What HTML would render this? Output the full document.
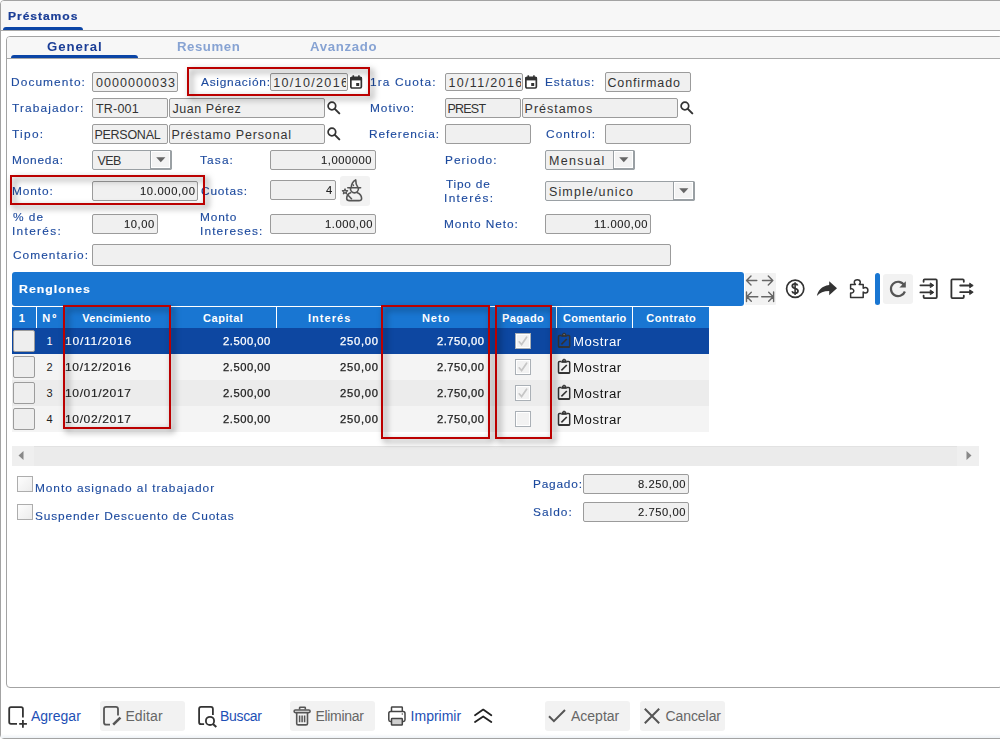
<!DOCTYPE html><html><head><meta charset="utf-8"><style>
html,body{margin:0;padding:0;width:1000px;height:741px;overflow:hidden;background:#fff;}
body{position:relative;font-family:"Liberation Sans",sans-serif;}
.a{position:absolute;box-sizing:border-box;}
.t{position:absolute;white-space:nowrap;}
.inp{position:absolute;box-sizing:border-box;background:#f0f0f0;border:1px solid #9b9b9b;border-radius:2px;}
.btn{position:absolute;box-sizing:border-box;background:#f3f3f3;border-left:1px solid #9b9b9b;box-shadow:inset 1px 1px 0 #fff, inset -1px -1px 0 #fff;}
.red{position:absolute;box-sizing:border-box;border:2px solid #bb0000;filter:drop-shadow(3.5px 3.5px 3px rgba(0,0,0,.55));}
svg{position:absolute;overflow:visible;}
</style></head><body>
<div class="a" style="left:0px;top:0px;width:1010px;height:739px;border:1px solid #a3a3a3;border-radius:4px;background:#fff;"></div>
<div class="a" style="left:1px;top:1px;width:1010px;height:29px;background:#f7f7f7;border-radius:3px 0 0 0;"></div>
<div class="a" style="left:1px;top:30px;width:1010px;height:1px;background:#a8a8a8;"></div>
<div class="t" style="left:7.90px;top:1.00px;font-size:11px;line-height:30px;color:#1a3d96;letter-spacing:0.852px;font-weight:bold;transform:scaleX(1.1);transform-origin:0 0;-webkit-text-stroke:0.2px #1a3d96;">Préstamos</div>
<div class="a" style="left:3px;top:27px;width:80px;height:3px;background:#0b45a6;border-radius:3px 3px 0 0;"></div>
<div class="a" style="left:1px;top:734px;width:1010px;height:4px;background:linear-gradient(#fff,#eef2f6);"></div>
<div class="a" style="left:6px;top:36px;width:997px;height:652px;border:1px solid #a3a3a3;border-radius:4px;background:#fff;"></div>
<div class="a" style="left:7px;top:37px;width:995px;height:21px;background:#f7f7f7;border-radius:3px 0 0 0;"></div>
<div class="a" style="left:7px;top:58px;width:995px;height:1px;background:#a8a8a8;"></div>
<div class="a" style="left:11px;top:55px;width:127px;height:3px;background:#0b45a6;border-radius:3px 3px 0 0;"></div>
<div class="t" style="left:47.20px;top:32.00px;font-size:12px;line-height:30px;color:#1a3d96;letter-spacing:0.833px;font-weight:bold;transform:scaleX(1.1);transform-origin:0 0;">General</div>
<div class="t" style="left:177.30px;top:32.00px;font-size:12px;line-height:30px;color:#87a3d3;letter-spacing:0.500px;font-weight:bold;transform:scaleX(1.1);transform-origin:0 0;">Resumen</div>
<div class="t" style="left:310.40px;top:32.00px;font-size:12px;line-height:30px;color:#87a3d3;letter-spacing:0.623px;font-weight:bold;transform:scaleX(1.1);transform-origin:0 0;">Avanzado</div>
<div class="t" style="left:11.42px;top:67.00px;font-size:11px;line-height:30px;color:#1d4a9e;letter-spacing:1.014px;transform:scaleX(1.08);transform-origin:0 0;-webkit-text-stroke:0.12px #1d4a9e;">Documento:</div>
<div class="t" style="left:200.60px;top:67.00px;font-size:11px;line-height:30px;color:#1d4a9e;letter-spacing:0.696px;transform:scaleX(1.08);transform-origin:0 0;-webkit-text-stroke:0.12px #1d4a9e;">Asignación:</div>
<div class="t" style="left:369.92px;top:67.00px;font-size:11px;line-height:30px;color:#1d4a9e;letter-spacing:1.029px;transform:scaleX(1.08);transform-origin:0 0;-webkit-text-stroke:0.12px #1d4a9e;">1ra Cuota:</div>
<div class="t" style="left:544.52px;top:67.00px;font-size:11px;line-height:30px;color:#1d4a9e;letter-spacing:0.841px;transform:scaleX(1.08);transform-origin:0 0;-webkit-text-stroke:0.12px #1d4a9e;">Estatus:</div>
<div class="t" style="left:12.00px;top:93.00px;font-size:11px;line-height:30px;color:#1d4a9e;letter-spacing:1.028px;transform:scaleX(1.08);transform-origin:0 0;-webkit-text-stroke:0.12px #1d4a9e;">Trabajador:</div>
<div class="t" style="left:369.52px;top:93.00px;font-size:11px;line-height:30px;color:#1d4a9e;letter-spacing:0.877px;transform:scaleX(1.08);transform-origin:0 0;-webkit-text-stroke:0.12px #1d4a9e;">Motivo:</div>
<div class="t" style="left:12.00px;top:119.00px;font-size:11px;line-height:30px;color:#1d4a9e;letter-spacing:1.194px;transform:scaleX(1.08);transform-origin:0 0;-webkit-text-stroke:0.12px #1d4a9e;">Tipo:</div>
<div class="t" style="left:369.32px;top:119.00px;font-size:11px;line-height:30px;color:#1d4a9e;letter-spacing:0.852px;transform:scaleX(1.08);transform-origin:0 0;-webkit-text-stroke:0.12px #1d4a9e;">Referencia:</div>
<div class="t" style="left:545.60px;top:119.00px;font-size:11px;line-height:30px;color:#1d4a9e;letter-spacing:0.974px;transform:scaleX(1.08);transform-origin:0 0;-webkit-text-stroke:0.12px #1d4a9e;">Control:</div>
<div class="t" style="left:11.72px;top:145.00px;font-size:11px;line-height:30px;color:#1d4a9e;letter-spacing:0.728px;transform:scaleX(1.08);transform-origin:0 0;-webkit-text-stroke:0.12px #1d4a9e;">Moneda:</div>
<div class="t" style="left:200.40px;top:145.00px;font-size:11px;line-height:30px;color:#1d4a9e;letter-spacing:1.046px;transform:scaleX(1.08);transform-origin:0 0;-webkit-text-stroke:0.12px #1d4a9e;">Tasa:</div>
<div class="t" style="left:444.52px;top:145.00px;font-size:11px;line-height:30px;color:#1d4a9e;letter-spacing:0.963px;transform:scaleX(1.08);transform-origin:0 0;-webkit-text-stroke:0.12px #1d4a9e;">Periodo:</div>
<div class="t" style="left:11.92px;top:176.00px;font-size:11px;line-height:30px;color:#1d4a9e;letter-spacing:0.822px;transform:scaleX(1.08);transform-origin:0 0;-webkit-text-stroke:0.12px #1d4a9e;">Monto:</div>
<div class="t" style="left:201.00px;top:176.00px;font-size:11px;line-height:30px;color:#1d4a9e;letter-spacing:0.778px;transform:scaleX(1.08);transform-origin:0 0;-webkit-text-stroke:0.12px #1d4a9e;">Cuotas:</div>
<div class="t" style="left:445.50px;top:169.00px;font-size:11px;line-height:30px;color:#1d4a9e;letter-spacing:0.713px;transform:scaleX(1.08);transform-origin:0 0;-webkit-text-stroke:0.12px #1d4a9e;">Tipo de</div>
<div class="t" style="left:444.42px;top:183.00px;font-size:11px;line-height:30px;color:#1d4a9e;letter-spacing:1.257px;transform:scaleX(1.08);transform-origin:0 0;-webkit-text-stroke:0.12px #1d4a9e;">Interés:</div>
<div class="t" style="left:12.80px;top:202.00px;font-size:11px;line-height:30px;color:#1d4a9e;letter-spacing:0.926px;transform:scaleX(1.08);transform-origin:0 0;-webkit-text-stroke:0.12px #1d4a9e;">% de</div>
<div class="t" style="left:11.92px;top:216.00px;font-size:11px;line-height:30px;color:#1d4a9e;letter-spacing:1.217px;transform:scaleX(1.08);transform-origin:0 0;-webkit-text-stroke:0.12px #1d4a9e;">Interés:</div>
<div class="t" style="left:199.92px;top:202.00px;font-size:11px;line-height:30px;color:#1d4a9e;letter-spacing:0.759px;transform:scaleX(1.08);transform-origin:0 0;-webkit-text-stroke:0.12px #1d4a9e;">Monto</div>
<div class="t" style="left:199.92px;top:216.00px;font-size:11px;line-height:30px;color:#1d4a9e;letter-spacing:1.053px;transform:scaleX(1.08);transform-origin:0 0;-webkit-text-stroke:0.12px #1d4a9e;">Intereses:</div>
<div class="t" style="left:444.42px;top:208.50px;font-size:11px;line-height:30px;color:#1d4a9e;letter-spacing:0.839px;transform:scaleX(1.08);transform-origin:0 0;-webkit-text-stroke:0.12px #1d4a9e;">Monto Neto:</div>
<div class="t" style="left:12.60px;top:240.00px;font-size:11px;line-height:30px;color:#1d4a9e;letter-spacing:0.952px;transform:scaleX(1.08);transform-origin:0 0;-webkit-text-stroke:0.12px #1d4a9e;">Comentario:</div>
<div class="t" style="left:35.17px;top:473.00px;font-size:11px;line-height:30px;color:#1d4a9e;letter-spacing:0.865px;transform:scaleX(1.08);transform-origin:0 0;-webkit-text-stroke:0.12px #1d4a9e;">Monto asignado al trabajador</div>
<div class="t" style="left:35.17px;top:501.00px;font-size:11px;line-height:30px;color:#1d4a9e;letter-spacing:0.781px;transform:scaleX(1.08);transform-origin:0 0;-webkit-text-stroke:0.12px #1d4a9e;">Suspender Descuento de Cuotas</div>
<div class="t" style="left:532.52px;top:469.00px;font-size:11px;line-height:30px;color:#1d4a9e;letter-spacing:0.722px;transform:scaleX(1.08);transform-origin:0 0;-webkit-text-stroke:0.12px #1d4a9e;">Pagado:</div>
<div class="t" style="left:532.52px;top:497.00px;font-size:11px;line-height:30px;color:#1d4a9e;letter-spacing:0.926px;transform:scaleX(1.08);transform-origin:0 0;-webkit-text-stroke:0.12px #1d4a9e;">Saldo:</div>
<div class="inp" style="left:92px;top:72px;width:86px;height:20px;"></div>
<div class="t" style="left:96.00px;top:68.00px;font-size:12.5px;line-height:30px;color:#333;letter-spacing:1.044px;">0000000033</div>
<div class="inp" style="left:270px;top:73px;width:78px;height:18px;"></div>
<div class="a" style="left:271px;top:74px;width:75px;height:16px;overflow:hidden"><div class="t" style="left:273.20px;top:68.00px;font-size:12.5px;line-height:30px;color:#333;letter-spacing:1.350px;;left:2.20px;top:-6.00px">10/10/2016</div></div>
<div class="inp" style="left:445px;top:73px;width:78px;height:18px;"></div>
<div class="a" style="left:446px;top:74px;width:75px;height:16px;overflow:hidden"><div class="t" style="left:448.40px;top:68.00px;font-size:12.5px;line-height:30px;color:#333;letter-spacing:1.350px;;left:2.40px;top:-6.00px">10/11/2016</div></div>
<div class="inp" style="left:605px;top:72px;width:86px;height:20px;"></div>
<div class="t" style="left:607.40px;top:68.00px;font-size:12.5px;line-height:30px;color:#333;letter-spacing:0.889px;">Confirmado</div>
<div class="inp" style="left:92px;top:98px;width:76px;height:20px;"></div>
<div class="t" style="left:96.00px;top:94.00px;font-size:12.5px;line-height:30px;color:#333;letter-spacing:0.200px;">TR-001</div>
<div class="inp" style="left:169px;top:98px;width:156px;height:20px;"></div>
<div class="t" style="left:172.40px;top:94.00px;font-size:12.5px;line-height:30px;color:#333;letter-spacing:0.578px;">Juan Pérez</div>
<div class="inp" style="left:445px;top:98px;width:76px;height:20px;"></div>
<div class="t" style="left:447.40px;top:94.00px;font-size:12.5px;line-height:30px;color:#333;letter-spacing:-0.750px;">PREST</div>
<div class="inp" style="left:522px;top:98px;width:156px;height:20px;"></div>
<div class="t" style="left:524.60px;top:94.00px;font-size:12.5px;line-height:30px;color:#333;letter-spacing:0.975px;">Préstamos</div>
<div class="inp" style="left:92px;top:124px;width:76px;height:20px;"></div>
<div class="t" style="left:94.40px;top:120.00px;font-size:12.5px;line-height:30px;color:#333;letter-spacing:-0.257px;">PERSONAL</div>
<div class="inp" style="left:169px;top:124px;width:156px;height:20px;"></div>
<div class="t" style="left:171.40px;top:120.00px;font-size:12.5px;line-height:30px;color:#333;letter-spacing:0.831px;">Préstamo Personal</div>
<div class="inp" style="left:445px;top:124px;width:86px;height:20px;"></div>
<div class="inp" style="left:605px;top:124px;width:86px;height:20px;"></div>
<div class="inp" style="left:92px;top:150px;width:80px;height:20px;border-color:#9aa0a4"></div>
<div class="a" style="left:150px;top:150px;width:22px;height:20px;border:1px solid #9aa0a4;border-right-width:2px;border-bottom-width:2px;border-radius:0 2px 2px 0;background:#f3f3f3;box-shadow:inset 1px 1px 0 #fff, inset -1px -1px 0 #fff;"></div>
<svg style="left:0;top:0" width="1" height="1"><path d="M156.20000000000002 157.20000000000002 L165.4 157.20000000000002 L160.8 162.20000000000002 Z" fill="#666"/></svg>
<div class="t" style="left:97.40px;top:146.00px;font-size:12.5px;line-height:30px;color:#333;letter-spacing:-0.500px;">VEB</div>
<div class="inp" style="left:545px;top:150px;width:90px;height:20px;border-color:#9aa0a4"></div>
<div class="a" style="left:613px;top:150px;width:22px;height:20px;border:1px solid #9aa0a4;border-right-width:2px;border-bottom-width:2px;border-radius:0 2px 2px 0;background:#f3f3f3;box-shadow:inset 1px 1px 0 #fff, inset -1px -1px 0 #fff;"></div>
<svg style="left:0;top:0" width="1" height="1"><path d="M619.1999999999999 157.20000000000002 L628.4 157.20000000000002 L623.8 162.20000000000002 Z" fill="#666"/></svg>
<div class="t" style="left:549.00px;top:146.00px;font-size:12.5px;line-height:30px;color:#333;letter-spacing:1.333px;">Mensual</div>
<div class="inp" style="left:545px;top:181px;width:150px;height:20px;border-color:#9aa0a4"></div>
<div class="a" style="left:673px;top:181px;width:22px;height:20px;border:1px solid #9aa0a4;border-right-width:2px;border-bottom-width:2px;border-radius:0 2px 2px 0;background:#f3f3f3;box-shadow:inset 1px 1px 0 #fff, inset -1px -1px 0 #fff;"></div>
<svg style="left:0;top:0" width="1" height="1"><path d="M679.1999999999999 188.20000000000002 L688.4 188.20000000000002 L683.8 193.20000000000002 Z" fill="#666"/></svg>
<div class="t" style="left:549.00px;top:177.00px;font-size:12.5px;line-height:30px;color:#333;letter-spacing:1.127px;">Simple/unico</div>
<div class="inp" style="left:270px;top:150px;width:106px;height:20px;"></div>
<div class="t" style="left:321.28px;top:146.00px;font-size:10px;line-height:30px;color:#222;letter-spacing:0.469px;transform:scaleX(1.12);transform-origin:0 0;-webkit-text-stroke:0.1px #222;">1,000000</div>
<div class="inp" style="left:92px;top:181px;width:106px;height:20px;"></div>
<div class="t" style="left:140.08px;top:177.00px;font-size:10px;line-height:30px;color:#222;letter-spacing:0.563px;transform:scaleX(1.12);transform-origin:0 0;-webkit-text-stroke:0.1px #222;">10.000,00</div>
<div class="inp" style="left:270px;top:180px;width:66px;height:20px;"></div>
<div class="t" style="left:325.68px;top:176.00px;font-size:10px;line-height:30px;color:#222;letter-spacing:1.000px;transform:scaleX(1.12);transform-origin:0 0;-webkit-text-stroke:0.1px #222;">4</div>
<div class="inp" style="left:92px;top:214px;width:66px;height:20px;"></div>
<div class="t" style="left:124.08px;top:210.00px;font-size:10px;line-height:30px;color:#222;letter-spacing:0.518px;transform:scaleX(1.12);transform-origin:0 0;-webkit-text-stroke:0.1px #222;">10,00</div>
<div class="inp" style="left:270px;top:214px;width:106px;height:20px;"></div>
<div class="t" style="left:324.80px;top:210.00px;font-size:10px;line-height:30px;color:#222;letter-spacing:0.500px;transform:scaleX(1.12);transform-origin:0 0;-webkit-text-stroke:0.1px #222;">1.000,00</div>
<div class="inp" style="left:545px;top:214px;width:106px;height:20px;"></div>
<div class="t" style="left:593.64px;top:210.00px;font-size:10px;line-height:30px;color:#222;letter-spacing:0.500px;transform:scaleX(1.12);transform-origin:0 0;-webkit-text-stroke:0.1px #222;">11.000,00</div>
<div class="inp" style="left:92px;top:244px;width:579px;height:22px;"></div>
<div class="a" style="left:340px;top:176px;width:30px;height:30px;background:#f2f2f2;border-radius:3px;"></div>
<svg style="left:340px;top:176px" width="30" height="30" viewBox="0 0 30 30" fill="none" stroke="#555" stroke-width="1.6" stroke-linejoin="round" stroke-linecap="round">
<path d="M11.3 11.6 C11.3 8 13 5.5 15.7 3.9 C15.6 6.5 16.5 9.5 18 11.6"/><path d="M7.8 11.8 H20.6"/><path d="M13 8.6 L13.6 9.6" stroke-width="1.2"/>
<path d="M10.4 12.3 A4.05 4.6 0 0 0 18.5 12.3"/>
<path d="M10.6 16.7 C8 17.7 6.6 19.8 6.7 22.6 C6.8 24.2 8 24.6 9.5 24.6 H19 C20.6 24.6 21.7 24 21.6 22.4 C21.5 19.8 20 17.7 17.4 16.7"/>
<path d="M7.6 18.8 L11.5 22.7"/><path d="M5.00 12.90 L5.71 14.63 L7.57 14.77 L6.14 15.97 L6.59 17.78 L5.00 16.80 L3.41 17.78 L3.86 15.97 L2.43 14.77 L4.29 14.63 Z" stroke-width="1.3"/>
</svg>
<svg style="left:327px;top:101px" width="14" height="14" viewBox="0 0 14 14"><circle cx="4.9" cy="5" r="3.8" fill="none" stroke="#333" stroke-width="1.7"/><path d="M7.8 7.9 L12.3 12.4" stroke="#333" stroke-width="2" stroke-linecap="round"/></svg>
<svg style="left:680px;top:101px" width="14" height="14" viewBox="0 0 14 14"><circle cx="4.9" cy="5" r="3.8" fill="none" stroke="#333" stroke-width="1.7"/><path d="M7.8 7.9 L12.3 12.4" stroke="#333" stroke-width="2" stroke-linecap="round"/></svg>
<svg style="left:327px;top:127px" width="14" height="14" viewBox="0 0 14 14"><circle cx="4.9" cy="5" r="3.8" fill="none" stroke="#333" stroke-width="1.7"/><path d="M7.8 7.9 L12.3 12.4" stroke="#333" stroke-width="2" stroke-linecap="round"/></svg>
<svg style="left:350px;top:75px" width="13" height="14" viewBox="0 0 13 14"><rect x="0.85" y="2.4" width="10.5" height="10.6" rx="1.2" fill="none" stroke="#333" stroke-width="1.7"/><rect x="0.3" y="2" width="11.6" height="3.4" fill="#333"/><rect x="2.5" y="0.3" width="1.6" height="3" fill="#333"/><rect x="8.1" y="0.3" width="1.6" height="3" fill="#333"/><rect x="6.2" y="8" width="3" height="3" fill="#333"/></svg>
<svg style="left:525px;top:75px" width="13" height="14" viewBox="0 0 13 14"><rect x="0.85" y="2.4" width="10.5" height="10.6" rx="1.2" fill="none" stroke="#333" stroke-width="1.7"/><rect x="0.3" y="2" width="11.6" height="3.4" fill="#333"/><rect x="2.5" y="0.3" width="1.6" height="3" fill="#333"/><rect x="8.1" y="0.3" width="1.6" height="3" fill="#333"/><rect x="6.2" y="8" width="3" height="3" fill="#333"/></svg>
<div class="a" style="left:12px;top:272px;width:732px;height:34px;background:#1976d2;border-radius:3px;"></div>
<div class="t" style="left:19.38px;top:274.00px;font-size:11px;line-height:30px;color:#fff;letter-spacing:0.882px;font-weight:bold;transform:scaleX(1.12);transform-origin:0 0;-webkit-text-stroke:0.15px #fff;">Renglones</div>
<div class="a" style="left:12px;top:307px;width:697px;height:21px;background:#1976d2;"></div>
<div class="a" style="left:36px;top:307px;width:1px;height:21px;background:#fff;"></div>
<div class="a" style="left:276px;top:307px;width:1px;height:21px;background:#fff;"></div>
<div class="a" style="left:556px;top:307px;width:1px;height:21px;background:#fff;"></div>
<div class="a" style="left:632px;top:307px;width:1px;height:21px;background:#fff;"></div>
<div class="t" style="left:18.75px;top:303.00px;font-size:11px;line-height:30px;color:#fff;letter-spacing:0.000px;font-weight:bold;">1</div>
<div class="t" style="left:42.25px;top:303.00px;font-size:11px;line-height:30px;color:#fff;letter-spacing:1.950px;font-weight:bold;">Nº</div>
<div class="t" style="left:82.20px;top:303.00px;font-size:11px;line-height:30px;color:#fff;letter-spacing:0.380px;font-weight:bold;">Vencimiento</div>
<div class="t" style="left:203.00px;top:303.00px;font-size:11px;line-height:30px;color:#fff;letter-spacing:0.533px;font-weight:bold;">Capital</div>
<div class="t" style="left:307.90px;top:303.00px;font-size:11px;line-height:30px;color:#fff;letter-spacing:1.050px;font-weight:bold;">Interés</div>
<div class="t" style="left:421.90px;top:303.00px;font-size:11px;line-height:30px;color:#fff;letter-spacing:1.033px;font-weight:bold;">Neto</div>
<div class="t" style="left:502.00px;top:303.00px;font-size:11px;line-height:30px;color:#fff;letter-spacing:0.400px;font-weight:bold;">Pagado</div>
<div class="t" style="left:563.00px;top:303.00px;font-size:11px;line-height:30px;color:#fff;letter-spacing:0.244px;font-weight:bold;">Comentario</div>
<div class="t" style="left:646.20px;top:303.00px;font-size:11px;line-height:30px;color:#fff;letter-spacing:0.543px;font-weight:bold;">Contrato</div>
<div class="a" style="left:745px;top:273px;width:31px;height:32px;background:#f2f2f2;border-radius:1px;"></div>
<svg style="left:740px;top:270px" width="40" height="40" viewBox="0 0 40 40" fill="none" stroke="#666" stroke-width="1.4" stroke-linecap="round" stroke-linejoin="round">
<path d="M6.5 10.5 H16.8 M11 6 L6.5 10.5 L11 15"/>
<path d="M22.5 10.5 H32.8 M28.3 6 L32.8 10.5 L28.3 15"/>
<path d="M6.5 22 V31.5 M6.8 26.8 H17.8 M11.3 22.3 L6.8 26.8 L11.3 31.3"/>
<path d="M33.6 22 V31.5 M21.7 26.8 H33.2 M28.7 22.3 L33.2 26.8 L28.7 31.3"/>
</svg>
<svg style="left:785px;top:279px" width="20" height="20" viewBox="0 0 20 20" fill="none" stroke="#333">
<circle cx="10.2" cy="9.8" r="8.6" stroke-width="1.7"/>
<path d="M12.6 6.6 C12.2 5.3 11.2 4.9 10 4.9 C8.4 4.9 7.3 5.7 7.3 7.1 C7.3 8.6 8.8 9.1 10.2 9.5 C11.7 9.9 13 10.4 13 12 C13 13.4 11.8 14.2 10.1 14.2 C8.6 14.2 7.5 13.6 7.1 12.3" stroke-width="1.8"/>
<path d="M10.1 3.3 V15.9" stroke-width="1.6"/>
</svg>
<svg style="left:816px;top:280px" width="22" height="16" viewBox="0 0 22 16">
<path d="M13.2 1.2 L21 8.2 L13.2 15.2 V11 C7.6 11 3.9 12.6 0.9 16 C2 10.8 5.3 6 13.2 5 Z" fill="#333"/>
</svg>
<svg style="left:848px;top:278px" width="22" height="22" viewBox="0 0 22 22" fill="none" stroke="#333" stroke-width="1.5" stroke-linejoin="round">
<path d="M2.6 6.5 H7.4 C6.6 5.8 6.3 5 6.3 4.3 C6.3 2.8 7.6 1.7 9.3 1.7 C11 1.7 12.3 2.8 12.3 4.3 C12.3 5 12 5.8 11.2 6.5 H15.2 V10.3 C15.9 9.7 16.6 9.4 17.3 9.4 C18.8 9.4 19.9 10.6 19.9 12.2 C19.9 13.8 18.8 15 17.3 15 C16.6 15 15.9 14.7 15.2 14.1 V19.4 H2.6 V14.9 C3.4 15.1 4.1 15.1 4.7 14.7 C5.8 14.1 6.1 12.8 5.5 11.8 C5 10.9 3.7 10.5 2.6 10.9 Z"/>
</svg>
<div class="a" style="left:875px;top:273px;width:5px;height:32px;background:#1976d2;border-radius:3px;"></div>
<div class="a" style="left:883px;top:274px;width:30px;height:30px;background:#f2f2f2;border-radius:3px;"></div>
<svg style="left:883px;top:274px" width="30" height="30" viewBox="0 0 30 30" fill="none" stroke="#555" stroke-width="2.2">
<path d="M21.3 11.2 A7.2 7.2 0 1 0 21.9 17.5"/>
<path d="M22.8 7.2 V13.6 H16.4 Z" fill="#555" stroke="none"/>
</svg>
<svg style="left:918px;top:276px" width="22" height="24" viewBox="0 0 22 24" fill="none" stroke="#333" stroke-width="1.8" stroke-linecap="round" stroke-linejoin="round">
<path d="M5.6 5.8 V4.4 C5.6 3.8 6 3.4 6.6 3.4 H17.8 C18.4 3.4 18.8 3.8 18.8 4.4 V21.1 C18.8 21.7 18.4 22.1 17.8 22.1 H6.6 C6 22.1 5.6 21.7 5.6 21.1 V19.6"/>
<path d="M2.4 9.3 H13.2 M2.4 16.4 H13.2"/>
<path d="M12.6 7.2 L15.8 9.3 L12.6 11.4 Z M12.6 14.3 L15.8 16.4 L12.6 18.5 Z" fill="#333" stroke-width="1"/>
</svg>
<svg style="left:946px;top:276px" width="30" height="24" viewBox="0 0 30 24" fill="none" stroke="#333" stroke-width="1.8" stroke-linecap="round" stroke-linejoin="round">
<path d="M17.8 5.8 V4.4 C17.8 3.8 17.4 3.4 16.8 3.4 H6.4 C5.8 3.4 5.4 3.8 5.4 4.4 V21.1 C5.4 21.7 5.8 22.1 6.4 22.1 H16.8 C17.4 22.1 17.8 21.7 17.8 21.1 V19.6"/>
<path d="M14.2 9.5 H24.6 M14.2 16.2 H24.6"/>
<path d="M24 7.4 L27.2 9.5 L24 11.6 Z M24 14.1 L27.2 16.2 L24 18.3 Z" fill="#333" stroke-width="1"/>
</svg>
<div class="a" style="left:12px;top:328px;width:697px;height:26px;background:#0d47a1;"></div>
<div class="a" style="left:13px;top:330px;width:22px;height:22px;background:#eeeeee;border:1px solid #9c9c9c;border-radius:2px;"></div>
<div class="t" style="left:46.50px;top:326.00px;font-size:11px;line-height:30px;color:#fff;letter-spacing:1.000px;">1</div>
<div class="t" style="left:65.10px;top:326.00px;font-size:11px;line-height:30px;color:#fff;letter-spacing:0.657px;transform:scaleX(1.1);transform-origin:0 0;-webkit-text-stroke:0.15px #fff;">10/11/2016</div>
<div class="t" style="left:223.20px;top:327.00px;font-size:10px;line-height:30px;color:#fff;letter-spacing:0.474px;transform:scaleX(1.12);transform-origin:0 0;-webkit-text-stroke:0.25px #fff;">2.500,00</div>
<div class="t" style="left:340.40px;top:327.00px;font-size:10px;line-height:30px;color:#fff;letter-spacing:0.679px;transform:scaleX(1.12);transform-origin:0 0;-webkit-text-stroke:0.25px #fff;">250,00</div>
<div class="t" style="left:436.50px;top:327.00px;font-size:10px;line-height:30px;color:#fff;letter-spacing:0.436px;transform:scaleX(1.12);transform-origin:0 0;-webkit-text-stroke:0.25px #fff;">2.750,00</div>
<div class="a" style="left:515px;top:333px;width:16px;height:16px;background:#f2f2f2;border:1px solid #aab0b6;box-shadow:inset 0 0 0 1px #fff;"></div>
<svg style="left:515px;top:333px" width="16" height="16" viewBox="0 0 16 16"><path d="M4.2 8.8 L6.6 11.6 L11.6 4.2" fill="none" stroke="#c6c6c6" stroke-width="1.7" stroke-linecap="round"/></svg>
<svg style="left:557px;top:332px" width="15" height="17" viewBox="0 0 15 17" fill="none" stroke="#333"><path d="M4.4 3.4 H2.6 C1.9 3.4 1.5 3.8 1.5 4.5 V14.3 C1.5 15 1.9 15.3 2.6 15.3 H11.6 C12.3 15.3 12.7 15 12.7 14.3 V4.5 C12.7 3.8 12.3 3.4 11.6 3.4 H9.8" stroke-width="1.5"/><path d="M4.6 4.3 L5.6 2 C5.8 1.5 6.2 1.3 6.6 1.3 H7.6 C8 1.3 8.4 1.5 8.6 2 L9.6 4.3 Z" fill="#333" stroke-width="1"/><circle cx="7.1" cy="2.6" r="0.7" fill="#888" stroke="none"/><path d="M4.4 12.4 L9.8 7" stroke-width="1.6"/><path d="M1.5 14.8 H12.7" stroke-width="1.5"/></svg>
<div class="t" style="left:573.30px;top:327.00px;font-size:12px;line-height:30px;color:#fff;letter-spacing:0.530px;transform:scaleX(1.1);transform-origin:0 0;">Mostrar</div>
<div class="a" style="left:12px;top:354px;width:697px;height:26px;background:#f4f4f4;"></div>
<div class="a" style="left:13px;top:356px;width:22px;height:22px;background:#eeeeee;border:1px solid #9c9c9c;border-radius:2px;"></div>
<div class="t" style="left:46.50px;top:352.00px;font-size:11px;line-height:30px;color:#222;letter-spacing:1.000px;">2</div>
<div class="t" style="left:65.10px;top:352.00px;font-size:11px;line-height:30px;color:#222;letter-spacing:0.545px;transform:scaleX(1.1);transform-origin:0 0;-webkit-text-stroke:0.15px #222;">10/12/2016</div>
<div class="t" style="left:223.20px;top:353.00px;font-size:10px;line-height:30px;color:#222;letter-spacing:0.474px;transform:scaleX(1.12);transform-origin:0 0;-webkit-text-stroke:0.25px #222;">2.500,00</div>
<div class="t" style="left:340.40px;top:353.00px;font-size:10px;line-height:30px;color:#222;letter-spacing:0.679px;transform:scaleX(1.12);transform-origin:0 0;-webkit-text-stroke:0.25px #222;">250,00</div>
<div class="t" style="left:436.50px;top:353.00px;font-size:10px;line-height:30px;color:#222;letter-spacing:0.436px;transform:scaleX(1.12);transform-origin:0 0;-webkit-text-stroke:0.25px #222;">2.750,00</div>
<div class="a" style="left:515px;top:359px;width:16px;height:16px;background:#f2f2f2;border:1px solid #aab0b6;box-shadow:inset 0 0 0 1px #fff;"></div>
<svg style="left:515px;top:359px" width="16" height="16" viewBox="0 0 16 16"><path d="M4.2 8.8 L6.6 11.6 L11.6 4.2" fill="none" stroke="#c6c6c6" stroke-width="1.7" stroke-linecap="round"/></svg>
<svg style="left:557px;top:358px" width="15" height="17" viewBox="0 0 15 17" fill="none" stroke="#333"><path d="M4.4 3.4 H2.6 C1.9 3.4 1.5 3.8 1.5 4.5 V14.3 C1.5 15 1.9 15.3 2.6 15.3 H11.6 C12.3 15.3 12.7 15 12.7 14.3 V4.5 C12.7 3.8 12.3 3.4 11.6 3.4 H9.8" stroke-width="1.5"/><path d="M4.6 4.3 L5.6 2 C5.8 1.5 6.2 1.3 6.6 1.3 H7.6 C8 1.3 8.4 1.5 8.6 2 L9.6 4.3 Z" fill="#333" stroke-width="1"/><circle cx="7.1" cy="2.6" r="0.7" fill="#888" stroke="none"/><path d="M4.4 12.4 L9.8 7" stroke-width="1.6"/><path d="M1.5 14.8 H12.7" stroke-width="1.5"/></svg>
<div class="t" style="left:573.30px;top:353.00px;font-size:12px;line-height:30px;color:#111;letter-spacing:0.530px;transform:scaleX(1.1);transform-origin:0 0;">Mostrar</div>
<div class="a" style="left:12px;top:380px;width:697px;height:26px;background:#ececec;"></div>
<div class="a" style="left:13px;top:382px;width:22px;height:22px;background:#eeeeee;border:1px solid #9c9c9c;border-radius:2px;"></div>
<div class="t" style="left:46.50px;top:378.00px;font-size:11px;line-height:30px;color:#222;letter-spacing:1.000px;">3</div>
<div class="t" style="left:65.10px;top:378.00px;font-size:11px;line-height:30px;color:#222;letter-spacing:0.545px;transform:scaleX(1.1);transform-origin:0 0;-webkit-text-stroke:0.15px #222;">10/01/2017</div>
<div class="t" style="left:223.20px;top:379.00px;font-size:10px;line-height:30px;color:#222;letter-spacing:0.474px;transform:scaleX(1.12);transform-origin:0 0;-webkit-text-stroke:0.25px #222;">2.500,00</div>
<div class="t" style="left:340.40px;top:379.00px;font-size:10px;line-height:30px;color:#222;letter-spacing:0.679px;transform:scaleX(1.12);transform-origin:0 0;-webkit-text-stroke:0.25px #222;">250,00</div>
<div class="t" style="left:436.50px;top:379.00px;font-size:10px;line-height:30px;color:#222;letter-spacing:0.436px;transform:scaleX(1.12);transform-origin:0 0;-webkit-text-stroke:0.25px #222;">2.750,00</div>
<div class="a" style="left:515px;top:385px;width:16px;height:16px;background:#f2f2f2;border:1px solid #aab0b6;box-shadow:inset 0 0 0 1px #fff;"></div>
<svg style="left:515px;top:385px" width="16" height="16" viewBox="0 0 16 16"><path d="M4.2 8.8 L6.6 11.6 L11.6 4.2" fill="none" stroke="#c6c6c6" stroke-width="1.7" stroke-linecap="round"/></svg>
<svg style="left:557px;top:384px" width="15" height="17" viewBox="0 0 15 17" fill="none" stroke="#333"><path d="M4.4 3.4 H2.6 C1.9 3.4 1.5 3.8 1.5 4.5 V14.3 C1.5 15 1.9 15.3 2.6 15.3 H11.6 C12.3 15.3 12.7 15 12.7 14.3 V4.5 C12.7 3.8 12.3 3.4 11.6 3.4 H9.8" stroke-width="1.5"/><path d="M4.6 4.3 L5.6 2 C5.8 1.5 6.2 1.3 6.6 1.3 H7.6 C8 1.3 8.4 1.5 8.6 2 L9.6 4.3 Z" fill="#333" stroke-width="1"/><circle cx="7.1" cy="2.6" r="0.7" fill="#888" stroke="none"/><path d="M4.4 12.4 L9.8 7" stroke-width="1.6"/><path d="M1.5 14.8 H12.7" stroke-width="1.5"/></svg>
<div class="t" style="left:573.30px;top:379.00px;font-size:12px;line-height:30px;color:#111;letter-spacing:0.530px;transform:scaleX(1.1);transform-origin:0 0;">Mostrar</div>
<div class="a" style="left:12px;top:406px;width:697px;height:26px;background:#f4f4f4;"></div>
<div class="a" style="left:13px;top:408px;width:22px;height:22px;background:#eeeeee;border:1px solid #9c9c9c;border-radius:2px;"></div>
<div class="t" style="left:46.50px;top:404.00px;font-size:11px;line-height:30px;color:#222;letter-spacing:1.000px;">4</div>
<div class="t" style="left:65.10px;top:404.00px;font-size:11px;line-height:30px;color:#222;letter-spacing:0.545px;transform:scaleX(1.1);transform-origin:0 0;-webkit-text-stroke:0.15px #222;">10/02/2017</div>
<div class="t" style="left:223.20px;top:405.00px;font-size:10px;line-height:30px;color:#222;letter-spacing:0.474px;transform:scaleX(1.12);transform-origin:0 0;-webkit-text-stroke:0.25px #222;">2.500,00</div>
<div class="t" style="left:340.40px;top:405.00px;font-size:10px;line-height:30px;color:#222;letter-spacing:0.679px;transform:scaleX(1.12);transform-origin:0 0;-webkit-text-stroke:0.25px #222;">250,00</div>
<div class="t" style="left:436.50px;top:405.00px;font-size:10px;line-height:30px;color:#222;letter-spacing:0.436px;transform:scaleX(1.12);transform-origin:0 0;-webkit-text-stroke:0.25px #222;">2.750,00</div>
<div class="a" style="left:515px;top:411px;width:16px;height:16px;background:#f2f2f2;border:1px solid #aab0b6;box-shadow:inset 0 0 0 1px #fff;"></div>
<svg style="left:557px;top:410px" width="15" height="17" viewBox="0 0 15 17" fill="none" stroke="#333"><path d="M4.4 3.4 H2.6 C1.9 3.4 1.5 3.8 1.5 4.5 V14.3 C1.5 15 1.9 15.3 2.6 15.3 H11.6 C12.3 15.3 12.7 15 12.7 14.3 V4.5 C12.7 3.8 12.3 3.4 11.6 3.4 H9.8" stroke-width="1.5"/><path d="M4.6 4.3 L5.6 2 C5.8 1.5 6.2 1.3 6.6 1.3 H7.6 C8 1.3 8.4 1.5 8.6 2 L9.6 4.3 Z" fill="#333" stroke-width="1"/><circle cx="7.1" cy="2.6" r="0.7" fill="#888" stroke="none"/><path d="M4.4 12.4 L9.8 7" stroke-width="1.6"/><path d="M1.5 14.8 H12.7" stroke-width="1.5"/></svg>
<div class="t" style="left:573.30px;top:405.00px;font-size:12px;line-height:30px;color:#111;letter-spacing:0.530px;transform:scaleX(1.1);transform-origin:0 0;">Mostrar</div>
<div class="a" style="left:12px;top:446px;width:967px;height:20px;background:#ebebeb;border-top:1px solid #e2e2e2;"></div>
<div class="a" style="left:12px;top:446px;width:22px;height:20px;background:#efefef;"></div>
<div class="a" style="left:957px;top:446px;width:22px;height:20px;background:#efefef;"></div>
<svg style="left:18px;top:451px" width="6" height="9"><path d="M5.5 0 L0.5 4.5 L5.5 9 Z" fill="#888"/></svg>
<svg style="left:966px;top:451px" width="6" height="9"><path d="M0.5 0 L5.5 4.5 L0.5 9 Z" fill="#888"/></svg>
<div class="a" style="left:17px;top:476px;width:16px;height:16px;background:linear-gradient(135deg,#fdfdfd,#ececec);border:1px solid #adadad;"></div>
<div class="a" style="left:17px;top:504px;width:16px;height:16px;background:linear-gradient(135deg,#fdfdfd,#ececec);border:1px solid #adadad;"></div>
<div class="inp" style="left:583px;top:474px;width:106px;height:20px;"></div>
<div class="t" style="left:637.80px;top:470.00px;font-size:10px;line-height:30px;color:#222;letter-spacing:0.500px;transform:scaleX(1.12);transform-origin:0 0;-webkit-text-stroke:0.1px #222;">8.250,00</div>
<div class="inp" style="left:583px;top:502px;width:106px;height:20px;"></div>
<div class="t" style="left:637.80px;top:498.00px;font-size:10px;line-height:30px;color:#222;letter-spacing:0.500px;transform:scaleX(1.12);transform-origin:0 0;-webkit-text-stroke:0.1px #222;">2.750,00</div>
<div class="a" style="left:100px;top:701px;width:85px;height:30px;background:#f2f2f2;border-radius:3px;"></div>
<div class="a" style="left:290px;top:701px;width:85px;height:30px;background:#f2f2f2;border-radius:3px;"></div>
<div class="a" style="left:545px;top:701px;width:85px;height:30px;background:#f2f2f2;border-radius:3px;"></div>
<div class="a" style="left:640px;top:701px;width:85px;height:30px;background:#f2f2f2;border-radius:3px;"></div>
<div class="t" style="left:31.00px;top:701.00px;font-size:14px;line-height:30px;color:#1d4fb5;letter-spacing:0.000px;">Agregar</div>
<div class="t" style="left:125.40px;top:701.00px;font-size:14px;line-height:30px;color:#666;letter-spacing:0.120px;">Editar</div>
<div class="t" style="left:220.00px;top:701.00px;font-size:14px;line-height:30px;color:#1d4fb5;letter-spacing:-0.320px;">Buscar</div>
<div class="t" style="left:315.40px;top:701.00px;font-size:14px;line-height:30px;color:#666;letter-spacing:-0.286px;">Eliminar</div>
<div class="t" style="left:410.60px;top:701.00px;font-size:14px;line-height:30px;color:#1d4fb5;letter-spacing:0.000px;">Imprimir</div>
<div class="t" style="left:571.00px;top:701.00px;font-size:14px;line-height:30px;color:#666;letter-spacing:0.000px;">Aceptar</div>
<div class="t" style="left:665.40px;top:701.00px;font-size:14px;line-height:30px;color:#666;letter-spacing:-0.057px;">Cancelar</div>
<svg style="left:0;top:700px" width="30" height="30" viewBox="0 700 30 30" fill="none" stroke-linecap="butt" stroke-linejoin="round" stroke="#333" stroke-width="1.8"><path d="M17 723.8 H11 C9.9 723.8 9.2 723.1 9.2 722 V709 C9.2 707.9 9.9 707.2 11 707.2 H21.1 C22.2 707.2 22.9 707.9 22.9 709 V717.6"/><path d="M19.2 723.9 H26.9 M22.9 720.1 V727.8"/></svg>
<svg style="left:95px;top:700px" width="30" height="30" viewBox="95 700 30 30" fill="none" stroke-linecap="butt" stroke-linejoin="round" stroke="#555" stroke-width="1.8"><path d="M110 724.7 H106.2 C104.9 724.7 104 723.8 104 722.5 V709.1 C104 707.8 104.9 706.9 106.2 706.9 H115.8 C117.1 706.9 118 707.8 118 709.1 V715.6"/><path d="M113.2 724.6 L120.4 717.6" stroke-width="2.6"/></svg>
<svg style="left:190px;top:700px" width="30" height="30" viewBox="190 700 30 30" fill="none" stroke-linecap="butt" stroke-linejoin="round" stroke="#333" stroke-width="1.8"><path d="M204.1 724.2 H201.1 C200 724.2 199.1 723.3 199.1 722.2 V708.9 C199.1 707.8 200 706.9 201.1 706.9 H210.9 C212 706.9 212.9 707.8 212.9 708.9 V715"/><circle cx="210" cy="720.9" r="4.1"/><path d="M213 723.9 L216.3 727" stroke-width="2"/></svg>
<svg style="left:288px;top:700px" width="30" height="30" viewBox="288 700 30 30" fill="none" stroke="#555" stroke-width="1.6" stroke-linejoin="round"><rect x="294.1" y="710" width="16" height="2.6" rx="1.3"/><path d="M299.6 709.6 V707.8 C299.6 707.4 299.9 707.2 300.3 707.2 H304.6 C305 707.2 305.3 707.4 305.3 707.8 V709.6"/><path d="M296.7 713 V723.4 C296.7 724.4 297.3 724.9 298.2 724.9 H306 C306.9 724.9 307.5 724.4 307.5 723.4 V713"/><path d="M299.6 715.6 V722.2 M302.1 715.6 V722.2 M304.6 715.6 V722.2" stroke-width="1.5"/></svg>
<svg style="left:383px;top:700px" width="30" height="30" viewBox="383 700 30 30" fill="none" stroke="#444" stroke-width="1.5" stroke-linejoin="round"><path d="M391.5 711.4 V707.6 C391.5 707.2 391.8 706.9 392.2 706.9 H401.6 C402 706.9 402.3 707.2 402.3 707.6 V711.4"/><path d="M391.3 721.4 H390.4 C389.4 721.4 388.8 720.8 388.8 719.8 V713.4 C388.8 712.2 389.6 711.5 390.7 711.5 H403.1 C404.2 711.5 405 712.2 405 713.4 V719.8 C405 720.8 404.4 721.4 403.4 721.4 H402.5"/><rect x="391.5" y="718.6" width="10.8" height="6.4" rx="0.6" fill="#d0d0d0"/><circle cx="402.3" cy="714" r="0.7" fill="#444" stroke="none"/></svg>
<svg style="left:468px;top:700px" width="30" height="30" viewBox="468 700 30 30" fill="none" stroke="#222" stroke-width="1.8" stroke-linecap="round" stroke-linejoin="round"><path d="M475 715.3 L483.2 709.6 L491.3 715.3"/><path d="M475 722.1 L483.2 716.4 L491.3 722.1"/></svg>
<svg style="left:543px;top:700px" width="30" height="30" viewBox="543 700 30 30" fill="none" stroke="#555" stroke-width="2"><path d="M549 716.3 L553.9 721.2 L565 710"/></svg>
<svg style="left:638px;top:700px" width="30" height="30" viewBox="638 700 30 30" fill="none" stroke="#555" stroke-width="2"><path d="M644.8 708.8 L659.2 723.2 M659.2 708.8 L644.8 723.2"/></svg>
<div class="red" style="left:187px;top:67px;width:183px;height:29px;"></div>
<div class="red" style="left:10px;top:175px;width:195px;height:30px;"></div>
<div class="red" style="left:63px;top:305px;width:108px;height:124px;"></div>
<div class="red" style="left:381px;top:305px;width:109px;height:134px;"></div>
<div class="red" style="left:495px;top:305px;width:57px;height:134px;"></div>
</body></html>
